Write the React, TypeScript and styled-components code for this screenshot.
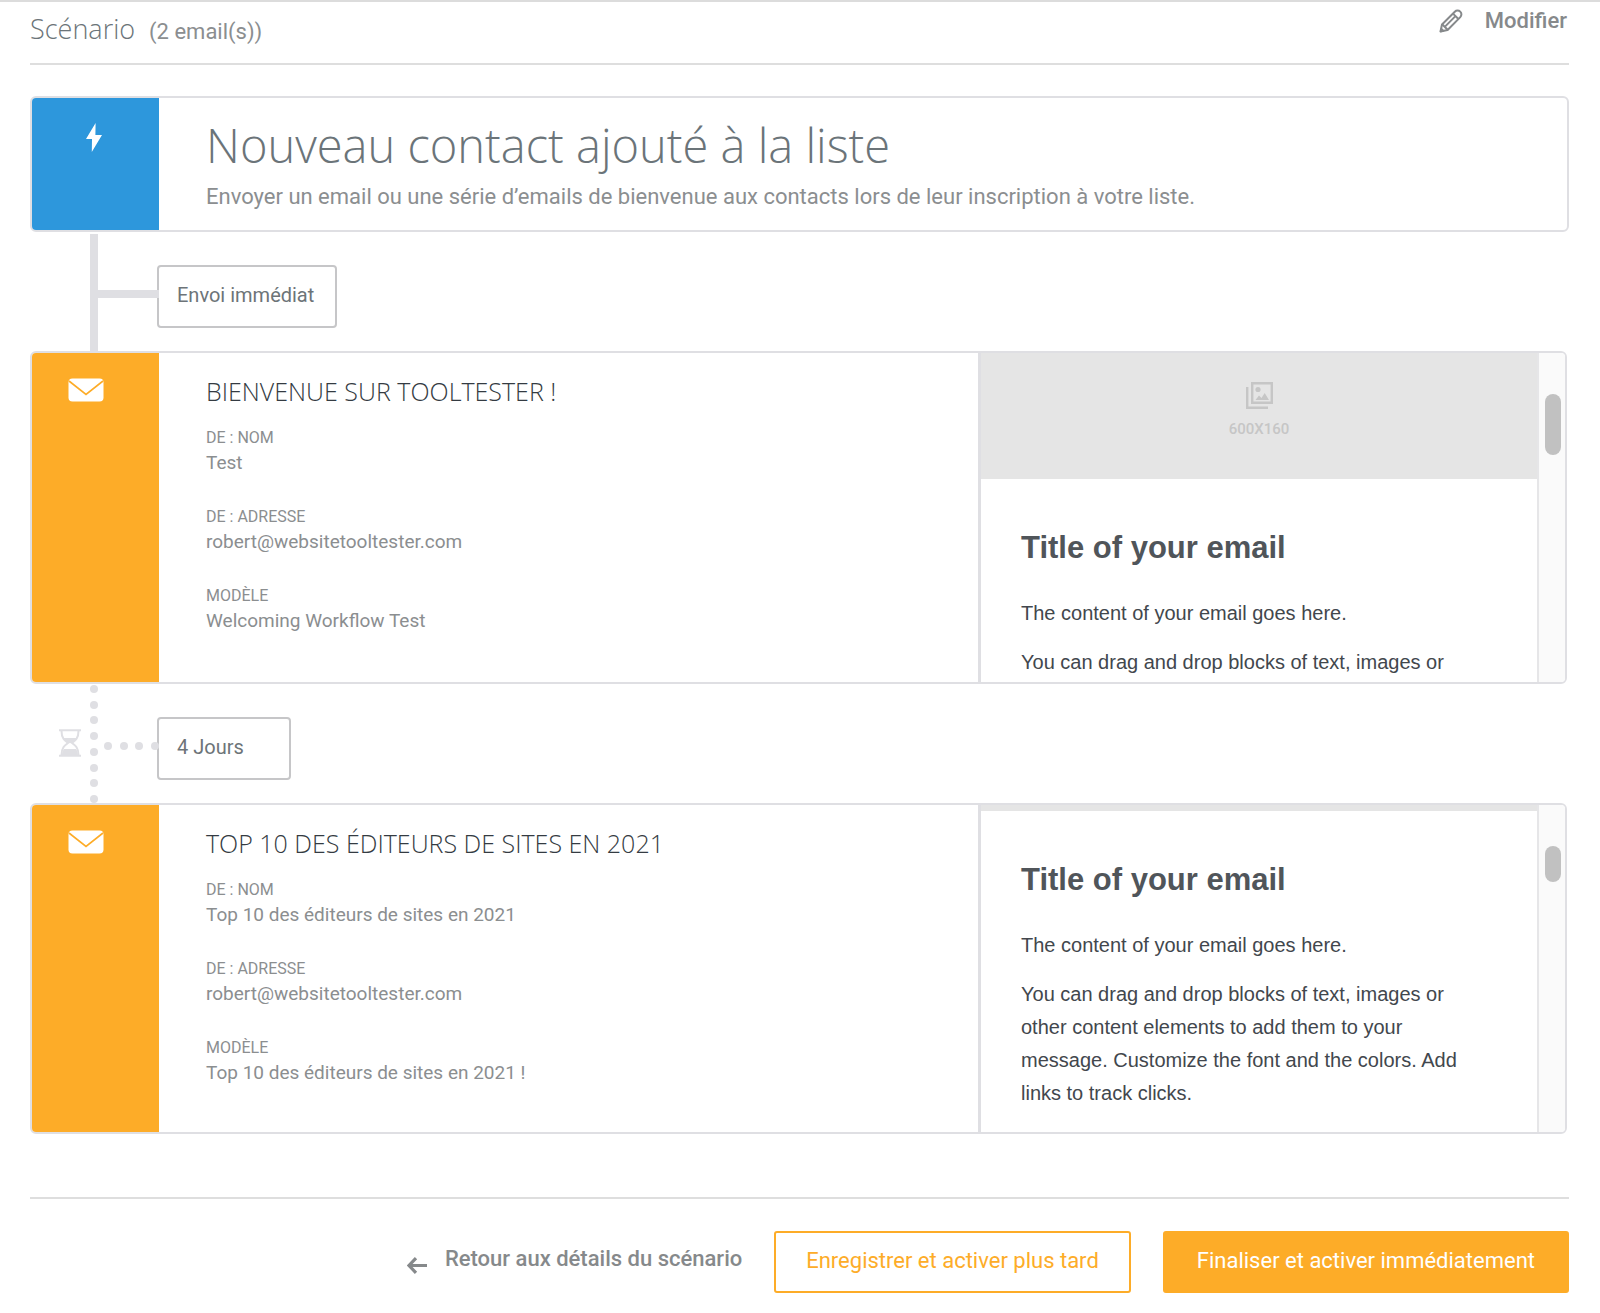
import React from "react";
import styled, { createGlobalStyle } from "styled-components";

const GlobalStyle = createGlobalStyle`
  *, *::before, *::after { box-sizing: border-box; }
  body {
    margin: 0;
    background: #fff;
    color: #8b8e90;
    font-family: Roboto, "Liberation Sans", sans-serif;
  }
  h1, h2, h3, p, dl, dd { margin: 0; }
  button { font: inherit; cursor: pointer; }
`;

const light = `"Open Sans", "Noto Sans", sans-serif`;
const line = "#dfdfe3";
const orange = "#fdac28";

const Page = styled.main`
  border-top: 2px solid #dcdcdc;
  padding: 0 31px 20px 30px;
`;

const Header = styled.header`
  display: flex;
  justify-content: space-between;
  align-items: flex-start;
  height: 63px;
  border-bottom: 2px solid #dedede;
  margin-bottom: 31px;
`;

const Heading = styled.div`
  display: flex;
  align-items: baseline;
  gap: 14px;
  padding-top: 8px;
`;

const Title = styled.h1`
  font: 300 27px/38px ${light};
  color: #6b7479;
`;

const Count = styled.span`
  font-size: 22px;
`;

const EditButton = styled.button`
  display: flex;
  align-items: center;
  gap: 22px;
  padding: 4px 2px 0 0;
  border: 0;
  background: none;
  color: #86898b;
  font-size: 22px;
  line-height: 29px;
  font-weight: 500;
`;

const Card = styled.section<{ $height: number; $inset?: number }>`
  display: flex;
  height: ${(p) => p.$height}px;
  margin-right: ${(p) => p.$inset ?? 0}px;
  border: 2px solid ${line};
  border-radius: 6px;
  overflow: hidden;
`;

const Side = styled.div<{ $color: string; $shift: number }>`
  flex: 0 0 127px;
  display: flex;
  justify-content: center;
  align-items: flex-start;
  padding: 25px ${(p) => p.$shift}px 0 0;
  background: ${(p) => p.$color};
`;

const TriggerBody = styled.div`
  padding: 18px 47px;
`;

const TriggerTitle = styled.h2`
  font: 300 47px/58px ${light};
  color: #6b7479;
`;

const TriggerText = styled.p`
  font-size: 22px;
  line-height: 46px;
`;

const Connector = styled.div`
  display: grid;
  grid-template-columns: 60px 8px 59px max-content;
  height: 119px;
`;

const IconCell = styled.div`
  padding: 45px 8px 0 0;
  display: flex;
  justify-content: flex-end;
  align-items: flex-start;
`;

const Rail = styled.div<{ $solid: boolean }>`
  display: flex;
  flex-direction: column;
  justify-content: space-between;
  margin-top: ${(p) => (p.$solid ? 2 : 1)}px;
  background: ${(p) => (p.$solid ? line : "none")};
`;

const Branch = styled.div<{ $solid: boolean }>`
  display: flex;
  justify-content: space-between;
  height: 8px;
  margin: 58px -2px 0 ${(p) => (p.$solid ? 0 : 6)}px;
  background: ${(p) => (p.$solid ? line : "none")};
  z-index: 1;
`;

const Dot = styled.span`
  width: 8px;
  height: 8px;
  border-radius: 50%;
  background: ${line};
`;

const Chip = styled.div`
  height: 63px;
  min-width: 134px;
  margin-top: 33px;
  padding: 0 21px 0 18px;
  border: 2px solid #c6c6c8;
  border-radius: 4px;
  font-size: 20px;
  line-height: 56px;
  color: #6d7478;
`;

const Details = styled.div`
  flex: 1;
  min-width: 0;
  padding: 21px 47px;
`;

const EmailTitle = styled.h2`
  font: 300 25px/34px ${light};
  color: #343b42;
  text-transform: uppercase;
  margin-bottom: 18px;
`;

const Field = styled.div`
  margin-bottom: 29px;
`;

const Label = styled.dt`
  font-size: 16px;
  line-height: 24px;
  text-transform: uppercase;
`;

const Value = styled.dd`
  font-size: 19px;
  line-height: 26px;
`;

const Preview = styled.div`
  flex: 0 0 587px;
  display: flex;
  border-left: 3px solid ${line};
`;

const Mail = styled.article`
  flex: 1;
  color: #42474d;
  font-family: "Liberation Sans", Arial, sans-serif;
`;

const Banner = styled.div<{ $height: number }>`
  display: flex;
  flex-direction: column;
  align-items: center;
  gap: 8px;
  height: ${(p) => p.$height}px;
  padding-top: ${(p) => (p.$height > 40 ? 29 : 0)}px;
  background: #e5e5e5;
  color: #c6c6c6;
  font: 500 15px/24px Roboto, sans-serif;
`;

const MailBody = styled.div`
  padding: 49px 66px 0 40px;
`;

const MailTitle = styled.h3`
  font-size: 31px;
  line-height: 40px;
  color: #50555a;
  margin-bottom: 29px;
`;

const MailText = styled.p`
  font-size: 20px;
  line-height: 33px;
  margin-bottom: 16px;
`;

const Track = styled.div`
  flex: 0 0 28px;
  border-left: 2px solid #e6e6e8;
  background: #fafafa;
  padding: 41px 4px 0 6px;
`;

const Thumb = styled.div<{ $size: number }>`
  height: ${(p) => p.$size}px;
  border-radius: 8px;
  background: #c1c1c1;
`;

const Footer = styled.footer`
  display: flex;
  justify-content: flex-end;
  align-items: stretch;
  gap: 32px;
  margin-top: 63px;
  padding-top: 32px;
  border-top: 2px solid #dedede;
`;

const BackLink = styled.a`
  display: flex;
  align-items: flex-start;
  gap: 18px;
  color: #86898b;
  font-size: 22px;
  line-height: 56px;
  font-weight: 500;
  text-decoration: none;
  svg { margin-top: 26px; }
`;

const ActionButton = styled.button<{ $filled?: boolean }>`
  height: 62px;
  padding: 0 ${(p) => (p.$filled ? 32 : 30)}px 3px;
  border: 2px solid ${orange};
  border-radius: 3px;
  background: ${(p) => (p.$filled ? orange : "#fff")};
  color: ${(p) => (p.$filled ? "#fff" : orange)};
  font-size: 22px;
`;

const PencilIcon = () => (
  <svg width="24" height="24" viewBox="0 0 24 24" fill="none" stroke="currentColor" strokeWidth="2" strokeLinejoin="round" aria-hidden="true">
    <path d="M1.500 22.500 3 15.500 15.800 2.700a3.700 3.700 0 0 1 5.500 5.400L8.600 21z" />
    <path d="M3.200 15.300l5.400 5.500M14 4.600l5.400 5.400M6 17.600 16.200 7.400M1.800 22.300l2.400-.6-1.800-1.800z" />
  </svg>
);

const BoltIcon = () => (
  <svg width="16" height="29" viewBox="0 0 16 29" fill="#fff" aria-hidden="true">
    <path d="M9.600 0 0 16h6l-.2 13L16 12H9.400z" />
  </svg>
);

const MailIcon = () => (
  <svg width="36" height="24" viewBox="0 0 36 24" aria-hidden="true">
    <rect x="0.500" y="0.500" width="35" height="23" rx="4" fill="#fff" />
    <path d="M1 3 18 16.500 35 3" fill="none" stroke={orange} strokeWidth="1.600" />
  </svg>
);

const HourglassIcon = () => (
  <svg width="24" height="28" viewBox="0 0 24 28" fill="none" stroke={line} strokeWidth="2" aria-label="Attente" role="img">
    <path d="M1 1.200h22M1 26.800h22" />
    <path d="M3.500 2c0 7 3 9.500 6.500 12-3.500 2.500-6.500 5-6.500 12M20.500 2c0 7-3 9.500-6.500 12 3.500 2.500 6.500 5 6.500 12" />
    <path d="M5.500 9h13c-1 2.500-3 3.500-5 5h-3c-2-1.500-4-2.500-5-5zM4 26c.2-3 .8-4.500 2-6h12c1.200 1.500 1.800 3 2 6z" fill={line} stroke="none" />
  </svg>
);

const ImagesIcon = () => (
  <svg width="27" height="27" viewBox="0 0 27 27" fill="none" stroke="currentColor" strokeWidth="2.400" aria-hidden="true">
    <path d="M6.200 1.200h19.600v19.600H6.200zM1.200 5v20.800H22" />
    <circle cx="12" cy="7.500" r="2.600" fill="currentColor" stroke="none" />
    <path d="m9.500 18 3.500-4.500 2.500 2.500 3.200-5L23 18z" fill="currentColor" stroke="none" />
  </svg>
);

const ArrowIcon = () => (
  <svg width="20" height="17" viewBox="0 0 20 17" fill="none" stroke="currentColor" strokeWidth="3.200" aria-hidden="true">
    <path d="M20 8.500H3M9 1.200 2 8.500l7 7.300" />
  </svg>
);

function Step({ solid = false, label }: { solid?: boolean; label: string }) {
  return (
    <Connector>
      <IconCell>{!solid && <HourglassIcon />}</IconCell>
      <Rail $solid={solid}>{!solid && Array.from({ length: 8 }, (_, i) => <Dot key={i} />)}</Rail>
      <Branch $solid={solid}>{!solid && Array.from({ length: 4 }, (_, i) => <Dot key={i} />)}</Branch>
      <Chip>{label}</Chip>
    </Connector>
  );
}

interface Email {
  title: string;
  name: string;
  template: string;
  excerpt: string;
  height: number;
  banner: number;
  thumb: number;
}

function EmailCard({ title, name, template, excerpt, height, banner, thumb }: Email) {
  const fields = [
    ["De : nom", name],
    ["De : adresse", "robert@websitetooltester.com"],
    ["Modèle", template],
  ];
  return (
    <Card $height={height} $inset={2}>
      <Side $color={orange} $shift={19}>
        <MailIcon />
      </Side>
      <Details>
        <EmailTitle>{title}</EmailTitle>
        <dl>
          {fields.map(([label, value]) => (
            <Field key={label}>
              <Label>{label}</Label>
              <Value>{value}</Value>
            </Field>
          ))}
        </dl>
      </Details>
      <Preview>
        <Mail>
          <Banner $height={banner}>
            {banner > 40 && (
              <>
                <ImagesIcon />
                <span>600X160</span>
              </>
            )}
          </Banner>
          <MailBody>
            <MailTitle>Title of your email</MailTitle>
            <MailText>The content of your email goes here.</MailText>
            <MailText>{excerpt}</MailText>
          </MailBody>
        </Mail>
        <Track>
          <Thumb $size={thumb} />
        </Track>
      </Preview>
    </Card>
  );
}

export default function App() {
  return (
    <>
      <GlobalStyle />
      <Page>
        <Header>
          <Heading>
            <Title>Scénario</Title>
            <Count>(2 email(s))</Count>
          </Heading>
          <EditButton type="button">
            <PencilIcon />
            Modifier
          </EditButton>
        </Header>

        <Card $height={136}>
          <Side $color="#2d97dc" $shift={4}>
            <BoltIcon />
          </Side>
          <TriggerBody>
            <TriggerTitle>Nouveau contact ajouté à la liste</TriggerTitle>
            <TriggerText>
              Envoyer un email ou une série d’emails de bienvenue aux contacts lors de leur
              inscription à votre liste.
            </TriggerText>
          </TriggerBody>
        </Card>

        <Step solid label="Envoi immédiat" />
        <EmailCard
          title="Bienvenue sur Tooltester !"
          name="Test"
          template="Welcoming Workflow Test"
          excerpt="You can drag and drop blocks of text, images or"
          height={333}
          banner={126}
          thumb={61}
        />
        <Step label="4 Jours" />
        <EmailCard
          title="Top 10 des éditeurs de sites en 2021"
          name="Top 10 des éditeurs de sites en 2021"
          template="Top 10 des éditeurs de sites en 2021 !"
          excerpt="You can drag and drop blocks of text, images or other content elements to add them to your message. Customize the font and the colors. Add links to track clicks."
          height={331}
          banner={6}
          thumb={36}
        />

        <Footer>
          <BackLink href="#details">
            <ArrowIcon />
            Retour aux détails du scénario
          </BackLink>
          <ActionButton type="button">Enregistrer et activer plus tard</ActionButton>
          <ActionButton type="button" $filled>
            Finaliser et activer immédiatement
          </ActionButton>
        </Footer>
      </Page>
    </>
  );
}
